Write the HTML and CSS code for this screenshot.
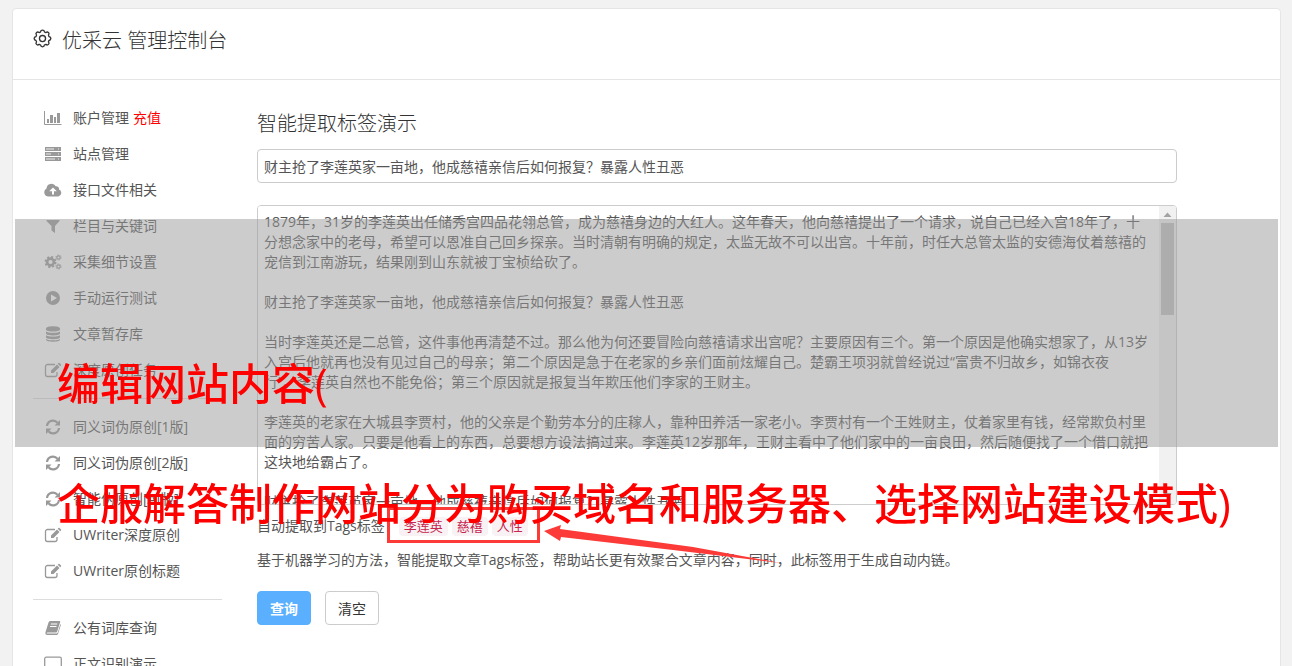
FILE: index.html
```html
<!DOCTYPE html>
<html lang="zh-CN">
<head>
    <meta charset="UTF-8">
    <meta name="viewport" content="width=device-width, initial-scale=1.0">
    <title>优采云 管理控制台</title>
    <link rel="stylesheet" href="styles.css">
</head>
<body>
    <!-- Icons -->
    <svg class="sprite" aria-hidden="true">
        <symbol id="icon-chart" viewBox="0 0 18 16">
            <path d="M.5 1v13.500h17" fill="none" stroke="currentColor"/>
            <path d="M3 9h2v4H3zM6 5h3v8H6zM10 7h2v6h-2zM13 3h3v10h-3z"/>
        </symbol>
        <symbol id="icon-server" viewBox="0 0 18 16">
            <path d="M1 1h16v4H1zM1 6h16v4H1zM1 11h16v4H1z"/>
            <path d="M2 3h8M2 8h5M2 13h9M14 3h1M14 8h1M14 13h1" stroke="#fff" stroke-opacity=".8"/>
        </symbol>
        <symbol id="icon-cloud" viewBox="0 0 18 16">
            <path fill-rule="evenodd" d="M4.500 14.500A4.200 4.200 0 0 1 2.500 6.600 5 5 0 0 1 11.800 4.300 2.800 2.800 0 0 1 15 7.600 3.600 3.600 0 0 1 14.300 14.500zM9 5.500L5.200 9.300H8v3.200h2V9.300h2.800z"/>
        </symbol>
        <symbol id="icon-filter" viewBox="0 0 18 16">
            <path d="M2.500 2h13v1L11 8v7l-3.500-2.500V8l-5-5z"/>
        </symbol>
        <symbol id="icon-cogs" viewBox="0 0 18 16">
            <g fill="none" stroke="currentColor">
                <circle cx="6.500" cy="8" r="3.400" stroke-width="2.600"/>
                <circle cx="6.500" cy="8" r="5.100" stroke-width="1.800" stroke-dasharray="2.100 1.905"/>
                <circle cx="14.500" cy="3.500" r="1.700" stroke-width="1.200"/>
                <circle cx="14.500" cy="3.500" r="2.600" stroke-dasharray="1.200 1.522"/>
                <circle cx="14.500" cy="12.500" r="1.700" stroke-width="1.200"/>
                <circle cx="14.500" cy="12.500" r="2.600" stroke-dasharray="1.200 1.522"/>
            </g>
        </symbol>
        <symbol id="icon-play" viewBox="0 0 18 16">
            <path fill-rule="evenodd" d="M9 1a7 7 0 1 0 0 14A7 7 0 0 0 9 1zM7 4.500l6 3.500-6 3.500z"/>
        </symbol>
        <symbol id="icon-database" viewBox="0 0 18 16">
            <path d="M2 2.500C2-.5 16-.5 16 2.500v1c0 2.800-14 2.800-14 0zM2 5.500c2 1.700 12 1.700 14 0v2c0 2.600-14 2.600-14 0zM2 9.300c2 1.700 12 1.700 14 0v1.900c0 2.600-14 2.600-14 0zM2 13c2 1.700 12 1.700 14 0v.8c0 2.600-14 2.600-14 0z"/>
        </symbol>
        <symbol id="icon-edit" viewBox="0 0 18 16">
            <path d="M11 2.500H3.500a2 2 0 0 0-2 2v8a2 2 0 0 0 2 2H11a2 2 0 0 0 2-2V10" fill="none" stroke="currentColor" stroke-width="1.300"/>
            <path d="M7 8.500L13 2.500l2.500 2.500-6 6H7zM13.700 1.800l.8-.8q.5-.4 1 0l1.500 1.500q.4.500 0 1l-.8.800z"/>
        </symbol>
        <symbol id="icon-refresh" viewBox="0 0 18 16">
            <path d="M3 7a6 6 0 0 1 10.500-3.300M15 9a6 6 0 0 1-10.500 3.300" fill="none" stroke="currentColor" stroke-width="2.200"/>
            <path d="M16 1v5.500h-5.500zM2 15V9.500h5.500z"/>
        </symbol>
        <symbol id="icon-book" viewBox="0 0 18 16">
            <path fill-rule="evenodd" d="M6 1h9.500q1 0 .7 1l-3 9.500q-.3 1-1.300 1H3.500q-1 .2-.6 1h9.700q.9 0 1.200-.9L16.400 4q.6.500.4 1.200L14 14q-.4 1-1.400 1H3q-2-.3-1.600-2.500L4.500 2.500Q5 1 6 1zM7 3.500l-.3 1h6.400l.3-1zM6.200 6l-.3 1h6.400l.3-1z"/>
        </symbol>
        <symbol id="icon-laptop" viewBox="0 0 18 16">
            <rect x=".7" y="1.200" width="16.600" height="11" rx="1.500" fill="none" stroke="currentColor" stroke-width="1.300"/>
            <path d="M6 14h6v1.500H6z"/>
        </symbol>
        <symbol id="icon-gear" viewBox="0 0 20 20">
            <g fill="none" stroke="currentColor" stroke-width="1.400">
                <circle cx="10" cy="10" r="3.200"/>
                <path d="M10 1.200q1.800 0 2.100 1.900.8.500 1.500.6 1.500-1.200 2.700.1 1.200 1.100 0 2.700.2.800.6 1.500 1.900.3 1.900 2t-1.900 2.100q-.5.700-.6 1.400 1.200 1.500 0 2.700t-2.700 0q-.8.200-1.500.6-.3 2-2.100 2t-2.100-2q-.7-.4-1.400-.6-1.600 1.200-2.800 0t0-2.700q-.2-.8-.6-1.400-1.900-.4-1.900-2.100t1.900-2q.4-.7.600-1.500-1.200-1.600 0-2.700 1.200-1.300 2.800-.1.700-.1 1.400-.6.300-1.900 2.100-1.900z"/>
            </g>
        </symbol>
    </svg>

    <div class="container">
        <header class="header">
            <svg class="header-icon"><use href="#icon-gear"/></svg>
            <h1>优采云 管理控制台</h1>
        </header>

        <div class="content">
            <!-- Sidebar -->
            <nav class="sidebar">
                <ul>
                    <li><svg class="icon"><use href="#icon-chart"/></svg><a href="#">账户管理</a> <a class="recharge" href="#">充值</a></li>
                    <li><svg class="icon"><use href="#icon-server"/></svg><a href="#">站点管理</a></li>
                    <li><svg class="icon"><use href="#icon-cloud"/></svg><a href="#">接口文件相关</a></li>
                    <li><svg class="icon"><use href="#icon-filter"/></svg><a href="#">栏目与关键词</a></li>
                    <li><svg class="icon"><use href="#icon-cogs"/></svg><a href="#">采集细节设置</a></li>
                    <li><svg class="icon"><use href="#icon-play"/></svg><a href="#">手动运行测试</a></li>
                    <li><svg class="icon"><use href="#icon-database"/></svg><a href="#">文章暂存库</a></li>
                    <li><svg class="icon"><use href="#icon-edit"/></svg><a href="#">深度原创任务</a></li>
                </ul>
                <ul>
                    <li><svg class="icon"><use href="#icon-refresh"/></svg><a href="#">同义词伪原创[1版]</a></li>
                    <li><svg class="icon"><use href="#icon-refresh"/></svg><a href="#">同义词伪原创[2版]</a></li>
                    <li><svg class="icon"><use href="#icon-refresh"/></svg><a href="#">智能伪原创[AI版]</a></li>
                    <li><svg class="icon"><use href="#icon-edit"/></svg><a href="#">UWriter深度原创</a></li>
                    <li><svg class="icon"><use href="#icon-edit"/></svg><a href="#">UWriter原创标题</a></li>
                </ul>
                <ul>
                    <li><svg class="icon"><use href="#icon-book"/></svg><a href="#">公有词库查询</a></li>
                    <li><svg class="icon"><use href="#icon-laptop"/></svg><a href="#">正文识别演示</a></li>
                </ul>
            </nav>

            <!-- Tag extraction form -->
            <form class="form">
                <h2>智能提取标签演示</h2>
                <input type="text" id="title" aria-label="标题" value="财主抢了李莲英家一亩地，他成慈禧亲信后如何报复？暴露人性丑恶">
                <div class="article">
                    <textarea id="article" aria-label="正文">1879年，31岁的李莲英出任储秀宫四品花翎总管，成为慈禧身边的大红人。这年春天，他向慈禧提出了一个请求，说自己已经入宫18年了，十分想念家中的老母，希望可以恩准自己回乡探亲。当时清朝有明确的规定，太监无故不可以出宫。十年前，时任大总管太监的安德海仗着慈禧的宠信到江南游玩，结果刚到山东就被丁宝桢给砍了。

财主抢了李莲英家一亩地，他成慈禧亲信后如何报复？暴露人性丑恶

当时李莲英还是二总管，这件事他再清楚不过。那么他为何还要冒险向慈禧请求出宫呢？主要原因有三个。第一个原因是他确实想家了，从13岁入宫后他就再也没有见过自己的母亲；第二个原因是急于在老家的乡亲们面前炫耀自己。楚霸王项羽就曾经说过“富贵不归故乡，如锦衣夜
行”。李莲英自然也不能免俗；第三个原因就是报复当年欺压他们李家的王财主。

李莲英的老家在大城县李贾村，他的父亲是个勤劳本分的庄稼人，靠种田养活一家老小。李贾村有一个王姓财主，仗着家里有钱，经常欺负村里面的穷苦人家。只要是他看上的东西，总要想方设法搞过来。李莲英12岁那年，王财主看中了他们家中的一亩良田，然后随便找了一个借口就把这块地给霸占了。

财主抢了李莲英家一亩地，他成慈禧亲信后如何报复？暴露人性丑恶</textarea>
                    <div class="scrollbar">
                        <svg viewBox="0 0 17 17"><path d="M4.500 11l4-4.500 4 4.500z"/></svg>
                        <div class="thumb"></div>
                        <svg class="down" viewBox="0 0 17 17"><path d="M4.500 6.500h8l-4 4.500z"/></svg>
                    </div>
                </div>
                <div class="tags">
                    <span>自动提取到Tags标签：</span>
                    <div class="tag-list">
                        <code>李莲英</code>
                        <code>慈禧</code>
                        <code>人性</code>
                        <svg class="arrow" viewBox="0 0 240 40"><path d="M1 6L18 0l-1 4L150 22l88 16-108-13L18 12l-1 4z"/></svg>
                    </div>
                </div>
                <p>基于机器学习的方法，智能提取文章Tags标签，帮助站长更有效聚合文章内容，同时，此标签用于生成自动内链。</p>
                <div class="buttons">
                    <button type="button" class="primary">查询</button>
                    <button type="reset">清空</button>
                </div>
            </form>
        </div>
    </div>

    <!-- Caption over the page -->
    <div class="band"></div>
    <div class="caption">
        <div>编辑网站内容(</div>
        <div>企服解答制作网站分为购买域名和服务器、选择网站建设模式)</div>
    </div>
</body>
</html>
```

FILE: styles.css
```css
* {
    margin: 0;
    padding: 0;
    box-sizing: border-box;
    font-family: 'Open Sans', 'Noto Sans CJK SC', sans-serif;
}

html {
    overflow: hidden;
}

body {
    position: relative;
    height: 100vh;
    padding: 8px 11px 0 12px;
    overflow: hidden;
    background: #f2f2f2;
    color: #555;
    font-size: 14px;
    line-height: 20px;
}

.sprite {
    display: none;
}

.container {
    background: white;
    border: 1px solid #e5e5e5;
    border-radius: 4px;
}

.header {
    display: flex;
    align-items: flex-start;
    gap: 10px;
    padding: 18px 20px 24px;
    border-bottom: 1px solid #e5e5e5;
    color: #333;
}

.header h1 {
    font-size: 20px;
    font-weight: 300;
    line-height: 28px;
}

.header-icon {
    width: 19px;
    height: 19px;
    margin-top: 2px;
}

.content {
    display: flex;
    gap: 35px;
    padding: 20px 103px 20px 20px;
}

/* Sidebar */
.sidebar {
    flex: 0 0 189px;
}

.sidebar ul {
    list-style: none;
}

.sidebar ul + ul {
    margin-top: 10px;
    padding-top: 10px;
    border-top: 1px solid #ddd;
}

.sidebar li {
    display: flex;
    align-items: center;
    height: 36px;
    padding-left: 11px;
}

.sidebar a {
    color: #555;
    text-decoration: none;
}

.sidebar .recharge {
    margin-left: 4px;
    color: #ff0000;
}

.icon {
    width: 18px;
    height: 16px;
    margin-right: 11px;
    color: #999;
    fill: currentColor;
}

/* Form */
.form {
    flex: 1;
    min-width: 0;
    padding-top: 10px;
}

.form h2 {
    margin-bottom: 11px;
    color: #333;
    font-size: 20px;
    font-weight: 300;
    line-height: 28px;
}

.form input,
.form textarea {
    display: block;
    width: 100%;
    padding: 6px;
    border: 1px solid #ccc;
    border-radius: 4px;
    outline: none;
    background: white;
    color: #555;
    font-size: 14px;
    line-height: 20px;
}

.form input {
    height: 34px;
    margin-bottom: 22px;
}

.article {
    position: relative;
    margin-bottom: 11px;
}

.form textarea {
    height: 300px;
    padding-right: 23px;
    resize: none;
    scrollbar-width: none;
}

.scrollbar {
    position: absolute;
    top: 1px;
    right: 1px;
    bottom: 1px;
    display: flex;
    flex-direction: column;
    width: 17px;
    border-radius: 0 3px 3px 0;
    background: #f1f1f1;
}

.scrollbar svg {
    flex: 0 0 17px;
    fill: #a3a3a3;
}

.scrollbar .thumb {
    height: 92px;
    margin: 0 2px auto;
    background: #c1c1c1;
}

.scrollbar .down {
    fill: #505050;
}

.tags {
    display: flex;
    align-items: center;
    height: 20px;
    margin-bottom: 14px;
}

.tag-list {
    position: relative;
    display: flex;
    gap: 4px;
}

/* Red frame round the tags */
.tag-list::before {
    content: "";
    position: absolute;
    top: -10px;
    right: -12px;
    bottom: -7px;
    left: -12px;
    border: 3px solid #fc3a37;
}

.tag-list code {
    padding: 0 5px;
    border-radius: 4px;
    background: #f9f2f4;
    color: #c7254e;
    font-size: 13px;
    line-height: 19px;
}

.arrow {
    position: absolute;
    top: 8px;
    left: calc(100% + 15px);
    width: 240px;
    height: 40px;
    fill: #fc3a37;
}

.buttons {
    display: flex;
    gap: 14px;
    margin-top: 21px;
}

button {
    height: 34px;
    padding: 0 12px;
    border: 1px solid #ccc;
    border-radius: 4px;
    background: white;
    color: #333;
    font-size: 14px;
    cursor: pointer;
}

button.primary {
    border-color: #5aafff;
    background: #5aafff;
    color: white;
    font-weight: bold;
}

/* Caption */
.band {
    position: absolute;
    top: 219px;
    right: 14px;
    left: 15px;
    height: 228px;
    background: rgba(153, 153, 153, 0.5);
    pointer-events: none;
}

.caption {
    position: absolute;
    top: 324px;
    left: 57px;
    color: #ff0000;
    font-size: 43px;
    font-weight: 500;
    line-height: 120px;
    white-space: nowrap;
    pointer-events: none;
}
```
